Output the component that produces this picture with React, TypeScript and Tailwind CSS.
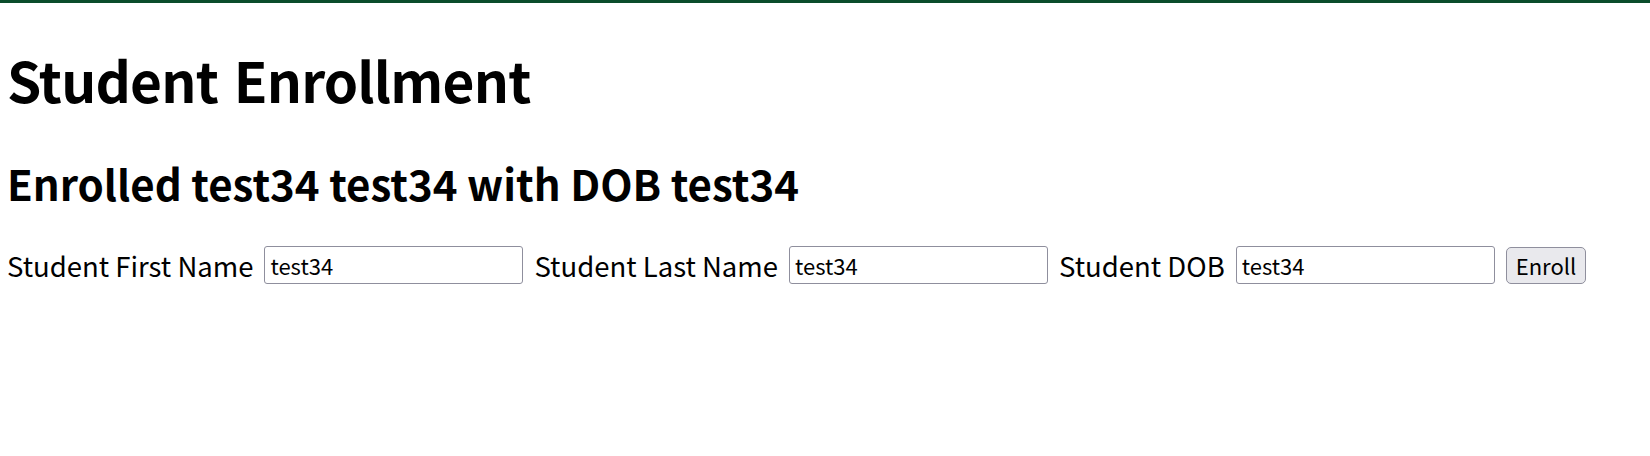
import React from 'react';

const font = { fontFamily: '"Noto Sans CJK KR", "Noto Sans", sans-serif' };

export default function App() {
  const [first, setFirst] = React.useState('test34');
  const [last, setLast] = React.useState('test34');
  const [dob, setDob] = React.useState('test34');

  return (
    <div className="min-h-screen bg-white text-black border-t-[3px] border-[#0b4d2b]" style={font}>
      <div className="pl-[7px]">
        <h1 className="mt-[49px] text-[55px] leading-none font-bold tracking-[-0.8px] [word-spacing:4px]">
          Student Enrollment
        </h1>
        <h2 className="mt-[55px] text-[42px] leading-none font-bold">
          Enrolled {first} {last} with DOB {dob}
        </h2>
        <form
          className="mt-[42px] flex items-center gap-[11px] text-[27.5px]"
          onSubmit={(e) => e.preventDefault()}
        >
          <label className="leading-[38px]">Student First Name</label>
          <input
            value={first}
            onChange={(e) => setFirst(e.target.value)}
            className="w-[259px] h-[38px] px-[5px] border border-[#8f8f9d] rounded-[3px] text-[22px] outline-none"
          />
          <label className="leading-[38px]">Student Last Name</label>
          <input
            value={last}
            onChange={(e) => setLast(e.target.value)}
            className="w-[259px] h-[38px] px-[5px] border border-[#8f8f9d] rounded-[3px] text-[22px] outline-none"
          />
          <label className="leading-[38px]">Student DOB</label>
          <input
            value={dob}
            onChange={(e) => setDob(e.target.value)}
            className="w-[259px] h-[38px] px-[5px] border border-[#8f8f9d] rounded-[3px] text-[22px] outline-none"
          />
          <button
            type="submit"
            className="h-[37px] px-[9px] bg-[#e9e9ed] border border-[#8f8f9d] rounded-[5px] text-[22px] leading-none"
          >
            Enroll
          </button>
        </form>
      </div>
    </div>
  );
}
